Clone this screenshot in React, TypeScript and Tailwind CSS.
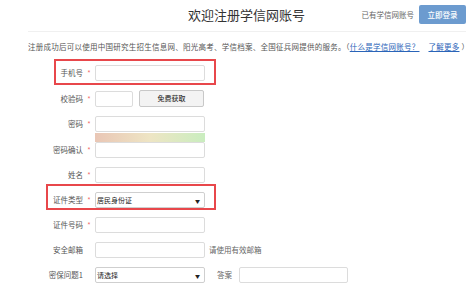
import React from "react";

const font = { fontFamily: '"Noto Sans CJK SC", "Noto Sans", sans-serif' };

function Label({ text, required }: { text: string; required?: boolean }) {
  return (
    <>
      <span className="w-[55px] text-right text-[7.5px] leading-[16px] text-[#555]">{text}</span>
      <span className="w-[12px] text-center text-[7.5px] leading-[16px] text-[#f26b6b]">{required ? "*" : ""}</span>
    </>
  );
}

function Input({ w = "w-[110px]" }: { w?: string }) {
  return <div className={`${w} h-[16px] rounded-[2px] border border-[#dcdcdc] bg-white`} />;
}

function Select({ value }: { value: string }) {
  return (
    <div className="w-[110px] h-[16px] rounded-[2px] border border-[#cfcfcf] bg-white flex items-center pl-[1px] pr-[4px]">
      <span className="text-[7px] text-[#222] leading-none">{value}</span>
      <span className="ml-auto text-[5px] text-[#222] leading-none">▼</span>
    </div>
  );
}

export default function App() {
  return (
    <div className="relative w-[472px] h-[286px] overflow-hidden bg-white" style={font}>
      <div className="ml-[28px] w-[438px]">
        {/* header */}
        <div className="flex items-start h-[32px] border-b border-[#f0f0f0]">
          <h1 className="pl-[160px] pt-[5px] text-[13px] leading-[19px] text-[#333] font-normal">欢迎注册学信网账号</h1>
          <span className="ml-auto pt-[5px] text-[7.5px] leading-[19px] text-[#666]">已有学信网账号</span>
          <button className="ml-[5px] mt-[5px] w-[47px] h-[19px] rounded-[2px] bg-[#6c9bcf] text-white text-[7.5px] font-medium leading-none">
            立即登录
          </button>
        </div>

        <p className="pt-[9px] text-[7.5px] leading-[12px] tracking-[0.25px] text-[#555] whitespace-nowrap">
          注册成功后可以使用中国研究生招生信息网、阳光高考、学信档案、全国征兵网提供的服务。（
          <span className="text-[#2a64b8] underline">什么是学信网账号？</span>
          <span className="ml-[9px] text-[#2a64b8] underline">了解更多</span> ）
        </p>

        {/* form */}
        <div className="mt-[12px] flex flex-col gap-[9px]">
          <div className="flex items-center">
            <Label text="手机号" required />
            <Input />
          </div>
          <div className="flex items-center">
            <Label text="校验码" required />
            <Input w="w-[38px]" />
            <button className="ml-[6px] w-[65px] h-[17px] rounded-[2px] border border-[#c8c8c8] bg-[#f3f3f3] text-[7px] font-medium text-[#333] leading-none">
              免费获取
            </button>
          </div>
          <div className="flex flex-col">
            <div className="flex items-center">
              <Label text="密码" required />
              <Input />
            </div>
            <div className="flex">
              <div className="w-[67px]" />
              <div className="mt-[1px] w-[110px] h-[9px] bg-gradient-to-r from-[#e9c6b5] via-[#eee5c4] to-[#c9edbf]" />
            </div>
            <div className="flex items-center">
              <Label text="密码确认" required />
              <Input />
            </div>
          </div>
          <div className="flex items-center">
            <Label text="姓名" required />
            <Input />
          </div>
          <div className="flex items-center">
            <Label text="证件类型" required />
            <Select value="居民身份证" />
          </div>
          <div className="flex items-center">
            <Label text="证件号码" required />
            <Input />
          </div>
          <div className="flex items-center">
            <Label text="安全邮箱" />
            <Input />
            <span className="ml-[4px] text-[7.5px] text-[#666]">请使用有效邮箱</span>
          </div>
          <div className="flex items-center">
            <Label text="密保问题1" />
            <Select value="请选择" />
            <span className="ml-[12px] text-[7.5px] text-[#666]">答案</span>
            <div className="ml-[7px]">
              <Input w="w-[109px]" />
            </div>
          </div>
        </div>
      </div>

      {/* annotation boxes */}
      <div className="absolute left-[54px] top-[59px] w-[162px] h-[26px] border-2 border-[#e8474b]" />
      <div className="absolute left-[46px] top-[184px] w-[170px] h-[26px] border-2 border-[#e8474b]" />
    </div>
  );
}
